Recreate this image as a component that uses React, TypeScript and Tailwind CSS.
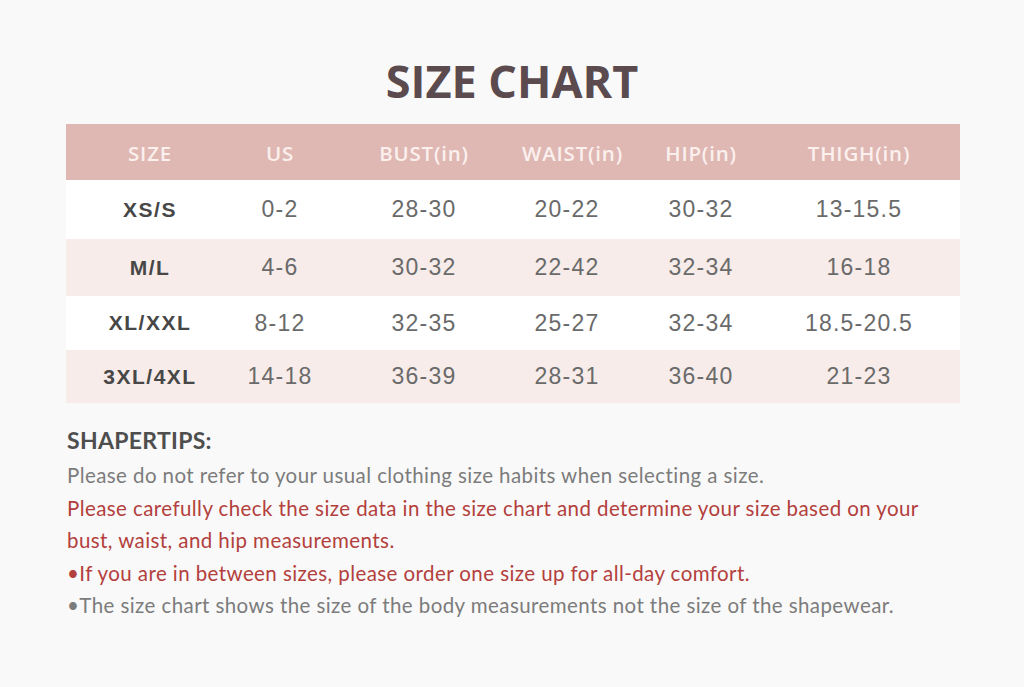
import React from "react";

const headers = ["SIZE", "US", "BUST(in)", "WAIST(in)", "HIP(in)", "THIGH(in)"];
const rows = [
  { cells: ["XS/S", "0-2", "28-30", "20-22", "30-32", "13-15.5"], bg: "bg-white", h: "h-[59px]" },
  { cells: ["M/L", "4-6", "30-32", "22-42", "32-34", "16-18"], bg: "bg-[#f7ece9]", h: "h-[57px]" },
  { cells: ["XL/XXL", "8-12", "32-35", "25-27", "32-34", "18.5-20.5"], bg: "bg-white", h: "h-[54px]" },
  { cells: ["3XL/4XL", "14-18", "36-39", "28-31", "36-40", "21-23"], bg: "bg-[#f7ece9]", h: "h-[53px]" },
];

const grid = "grid grid-cols-[168px_92px_196px_90px_178px_138px_1fr]";

export default function App() {
  return (
    <div className="w-[1024px] h-[687px] bg-[#f9f9f9] overflow-hidden">
      <div className="pt-[56px] h-[124px] flex justify-center">
        <h1 className="text-[45px] leading-[50px] font-bold text-[#5b4b4f] [font-family:'Open_Sans',sans-serif]">
          SIZE CHART
        </h1>
      </div>
      <div className="mx-[66px] w-[894px]">
        <div className={`${grid} h-[56px] pt-[3px] bg-[#dfb8b3] items-center`}>
          {headers.map((h) => (
            <div key={h} className="text-center text-[20.5px] tracking-[0.8px] font-semibold text-[#fbf0ee] [font-family:'Open_Sans',sans-serif]">
              {h}
            </div>
          ))}
          <div />
        </div>
        {rows.map((r, i) => (
          <div key={i} className={`${grid} ${r.h} ${r.bg} items-center`}>
            {r.cells.map((c, j) => (
              <div
                key={j}
                className={`text-center [font-family:'Liberation_Sans',Arial,sans-serif] ${
                  j === 0 ? "text-[21px] font-bold text-[#474747] tracking-[1.5px]" : "text-[23px] text-[#6a6a6a] tracking-[1.2px]"
                }`}
              >
                {c}
              </div>
            ))}
            <div />
          </div>
        ))}
      </div>
      <div className="ml-[67px] mt-[22px] [font-family:Lato,sans-serif]">
        <div className="text-[23px] font-bold text-[#4e4e4e] leading-[30px] tracking-[0.3px]">SHAPERTIPS:</div>
        <div className="text-[20.5px] leading-[32.5px] mt-[4px] tracking-[0.42px]">
          <p className="text-[#7c7c7c]">Please do not refer to your usual clothing size habits when selecting a size.</p>
          <p className="text-[#b3403d]">Please carefully check the size data in the size chart and determine your size based on your</p>
          <p className="text-[#b3403d]">bust, waist, and hip measurements.</p>
          <p className="text-[#b3403d]">•If you are in between sizes, please order one size up for all-day comfort.</p>
          <p className="text-[#7c7c7c]">•The size chart shows the size of the body measurements not the size of the shapewear.</p>
        </div>
      </div>
    </div>
  );
}
